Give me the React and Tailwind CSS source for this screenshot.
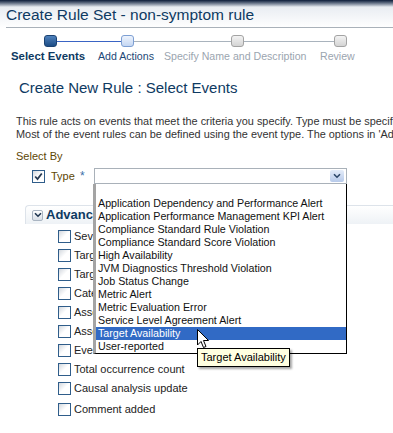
import React from "react";

const FONT = { fontFamily: '"Liberation Sans", Arial, sans-serif' };

function Chevron({ className = "", color = "#2c4668" }) {
  return (
    <svg width="8" height="6" viewBox="0 0 8 6" className={className}>
      <path d="M1 1.2 L4 4.2 L7 1.2" fill="none" stroke={color} strokeWidth="1.6" />
    </svg>
  );
}

function Box({ checked }) {
  return (
    <div className="w-[13px] h-[13px] border border-[#2f5d8a] bg-gradient-to-br from-[#d3d8de] via-white to-white flex items-center justify-center shrink-0">
      {checked && (
        <svg width="9" height="9" viewBox="0 0 9 9">
          <path d="M1.2 4.5 L3.5 7 L7.8 1.5" fill="none" stroke="#283a52" strokeWidth="1.8" />
        </svg>
      )}
    </div>
  );
}

const items = [
  "Application Dependency and Performance Alert",
  "Application Performance Management KPI Alert",
  "Compliance Standard Rule Violation",
  "Compliance Standard Score Violation",
  "High Availability",
  "JVM Diagnostics Threshold Violation",
  "Job Status Change",
  "Metric Alert",
  "Metric Evaluation Error",
  "Service Level Agreement Alert",
  "Target Availability",
  "User-reported",
];

const checks = [
  "Severity",
  "Target type",
  "Target",
  "Category",
  "Associated incident",
  "Associated problem",
  "Event name",
  "Total occurrence count",
  "Causal analysis update",
  "Comment added",
];

export default function App() {
  return (
    <div className="relative w-[393px] h-[433px] overflow-hidden bg-white text-[#222]" style={FONT}>
      {/* header */}
      <div className="h-[28px] bg-gradient-to-b from-[#0d1d38] via-[#e9edf2] via-[25%] to-white">
        <div className="ml-[6px] h-full border-b border-[#a9b1b9] flex items-center pt-[3px]">
          <span className="text-[15.5px] leading-none text-[#0e3a62]">Create Rule Set - non-symptom rule</span>
        </div>
      </div>

      {/* train */}
      <div className="pt-[7px]">
        <div className="flex items-center pl-[44px] h-[12px]">
          <div className="w-[13px] h-[12px] rounded-[3px] bg-gradient-to-b from-[#4f82bd] to-[#1c4d86] border border-[#1b4272]" />
          <div className="w-[64px] h-px bg-[#3a64c4]" />
          <div className="w-[13px] h-[12px] rounded-[3px] bg-gradient-to-b from-[#eef4fd] to-[#c4d6f2] border border-[#7d9fd3]" />
          <div className="w-[97px] h-px bg-[#a9b3bd]" />
          <div className="w-[13px] h-[12px] rounded-[3px] bg-gradient-to-b from-[#f3f3f3] to-[#d4d4d4] border border-[#a3a3a3]" />
          <div className="w-[90px] h-px bg-[#a9b3bd]" />
          <div className="w-[13px] h-[12px] rounded-[3px] bg-gradient-to-b from-[#f3f3f3] to-[#d4d4d4] border border-[#a3a3a3]" />
        </div>
        <div className="flex items-center pl-[11px] mt-[3px] h-[13px] text-[10.6px] whitespace-nowrap">
          <span className="font-bold text-[11.4px] text-[#0e3a62] w-[87px]">Select Events</span>
          <span className="text-[#1d4776] w-[66px]">Add Actions</span>
          <span className="text-[#9ba5af] w-[156px]">Specify Name and Description</span>
          <span className="text-[#9ba5af]">Review</span>
        </div>
      </div>

      {/* page heading */}
      <div className="mt-[16px] pl-[19px] h-[18px] flex items-center">
        <span className="text-[15px] text-[#0e3a62]">Create New Rule : Select Events</span>
      </div>

      {/* description */}
      <div className="mt-[18px] pl-[16px] text-[10.9px] leading-[13px] text-[#333] whitespace-nowrap">
        <div>This rule acts on events that meet the criteria you specify. Type must be specified.</div>
        <div>Most of the event rules can be defined using the event type. The options in 'Advanced'</div>
      </div>

      {/* select by */}
      <div className="mt-[9px] pl-[16px] h-[13px] leading-[13px] text-[11px] text-[#5e4705]">Select By</div>

      <div className="mt-[5px] flex items-center h-[16px] pl-[32px]">
        <Box checked />
        <span className="ml-[6px] text-[11px] text-[#5e4705] w-[23px]">Type</span>
        <span className="ml-[6px] text-[12px] text-[#3a6ea8] w-[8px] leading-none">*</span>
        <div className="ml-[6px] w-[253px] h-[16px] border border-[#a9b1b9] bg-white flex items-center justify-end pr-[2px]">
          <div className="w-[14px] h-[12px] rounded-[2px] bg-gradient-to-b from-[#e4ecf9] to-[#b7caea] flex items-center justify-center">
            <Chevron />
          </div>
        </div>
      </div>

      {/* advanced */}
      <div className="mt-[21px] ml-[25px] h-[19px] border-l border-t border-[#dde3ea] rounded-tl-[4px] bg-gradient-to-b from-white to-[#eef2f6] flex items-center pl-[6px]">
        <div className="w-[11px] h-[11px] rounded-[2px] border border-[#aab5c2] bg-gradient-to-b from-white to-[#d8dee6] flex items-center justify-center">
          <Chevron color="#1f3550" />
        </div>
        <span className="ml-[3px] text-[13px] font-bold text-[#0e3a62]">Advanced</span>
      </div>

      <div className="mt-[3px] pl-[58px]">
        {checks.map((c, i) => (
          <div key={c} className={"flex items-center h-[19px] " + (i === 9 ? "mt-[2px]" : "")}>
            <Box />
            <span className="ml-[3px] text-[11px] text-[#222] whitespace-nowrap">{c}</span>
          </div>
        ))}
      </div>

      {/* dropdown list */}
      <div className="absolute left-[93px] top-[184px] w-[254px] h-[170px] bg-white border-l-[3px] border-l-[#a4a4a4] border-r border-r-black border-b border-b-black pt-[13px]">
        {items.map((t, i) => (
          <div
            key={t}
            className={
              "h-[13px] leading-[13px] pl-[2px] text-[10.7px] whitespace-nowrap " +
              (i === 10 ? "bg-[#316ac5] text-white" : "text-[#111]")
            }
          >
            {t}
          </div>
        ))}
      </div>

      {/* tooltip */}
      <div className="absolute left-[197px] top-[348px] w-[93px] h-[19px] bg-[#ffffe1] border border-black shadow-[2px_2px_2px_rgba(0,0,0,0.35)] flex items-center pl-[3px] text-[11px] text-black whitespace-nowrap">
        Target Availability
      </div>

      {/* cursor */}
      <svg className="absolute left-[197px] top-[329px]" width="13" height="21" viewBox="0 0 13 21">
        <path d="M0.5 0.5 L0.5 16 L4 12.5 L6.5 18.5 L9 17.5 L6.5 11.5 L11.5 11.5 Z" fill="white" stroke="black" strokeWidth="1" />
      </svg>
    </div>
  );
}
